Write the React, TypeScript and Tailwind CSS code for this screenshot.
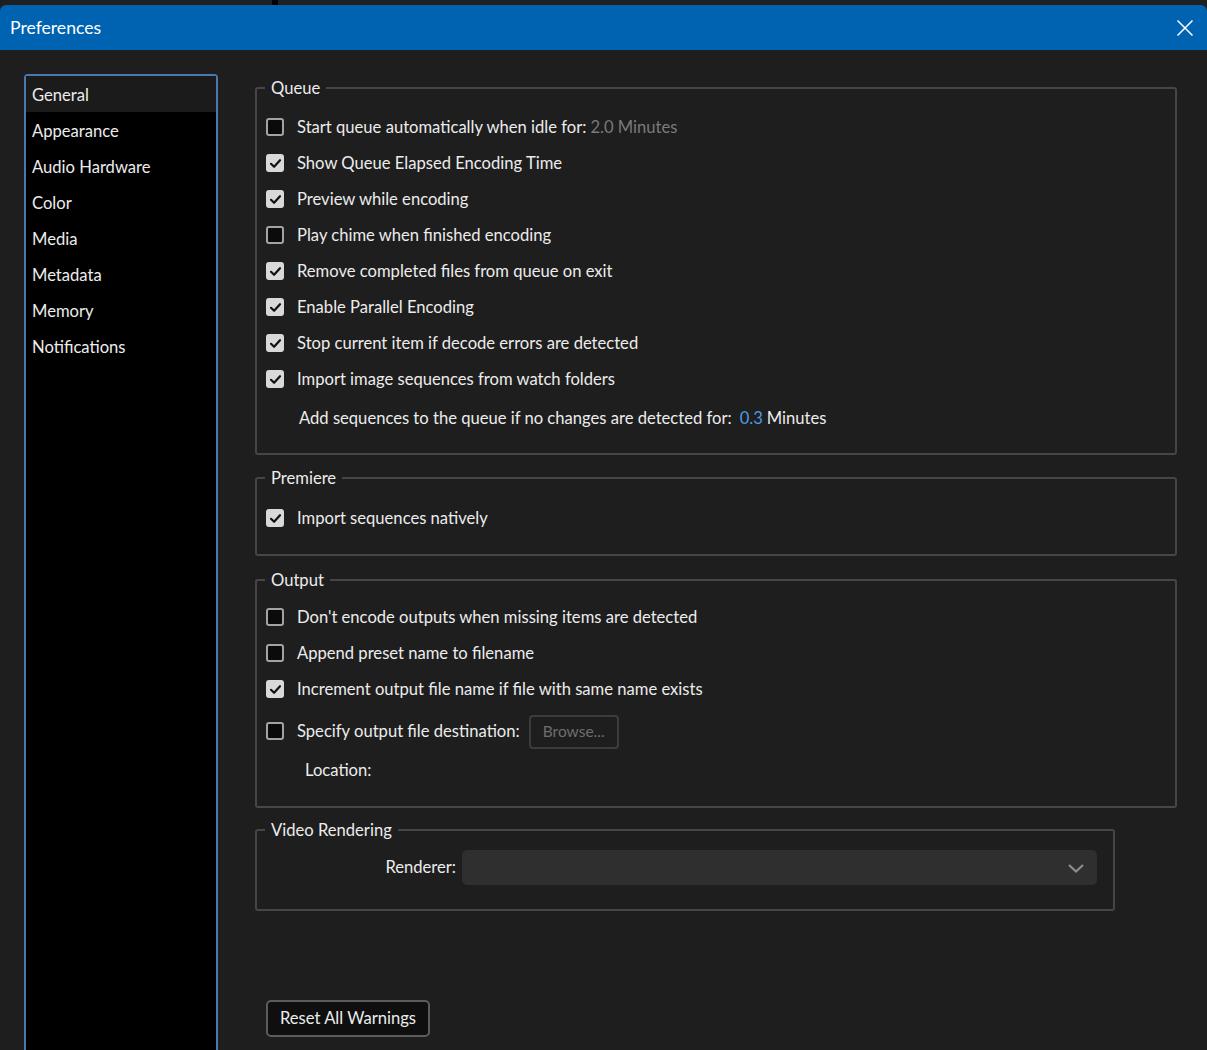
import React from "react";

const font = { fontFamily: '"Lato", "Liberation Sans", sans-serif' };

function Checkbox({ checked }: { checked: boolean }) {
  return checked ? (
    <span className="flex h-[18px] w-[18px] shrink-0 items-center justify-center rounded-[3px] bg-[#d9d9d9]">
      <svg width="13" height="13" viewBox="0 0 13 13" fill="none">
        <path d="M2 6.8 L5.1 9.8 L11 3.2" stroke="#111" strokeWidth="2.2" strokeLinecap="round" strokeLinejoin="round" />
      </svg>
    </span>
  ) : (
    <span className="h-[18px] w-[18px] shrink-0 rounded-[3px] border-2 border-[#a3a3a3] bg-[#0b0b0b]" />
  );
}

function Row({ checked, children, className = "h-9" }: { checked: boolean; children: React.ReactNode; className?: string }) {
  return (
    <div className={`flex items-center gap-[13px] pl-[9px] ${className}`}>
      <Checkbox checked={checked} />
      <div className="flex items-center pt-[1px] text-[16.6px] text-[#ececec]">{children}</div>
    </div>
  );
}

function Group({ title, children, className = "" }: { title: string; children: React.ReactNode; className?: string }) {
  return (
    <fieldset className={`rounded-[3px] border-2 border-[#464646] ${className}`}>
      <legend className="ml-[8px] px-[6px] text-[16.6px] leading-[24px] text-[#ececec]">{title}</legend>
      {children}
    </fieldset>
  );
}

const navItems = ["General", "Appearance", "Audio Hardware", "Color", "Media", "Metadata", "Memory", "Notifications"];

export default function App() {
  return (
    <div className="h-[1050px] w-[1207px] overflow-hidden bg-[#1e1e1e]" style={font}>
      <div className="flex h-[5px] bg-[#1f1f1f]">
        <div className="ml-[272px] h-[5px] w-[6px] bg-black" />
      </div>
      <div className="flex h-[45px] items-center justify-between rounded-t-[6px] bg-[#0063b1] pl-[10px] pr-[13px]">
        <span className="pt-[1px] text-[17.6px] text-white">Preferences</span>
        <svg width="18" height="18" viewBox="0 0 18 18" fill="none">
          <path d="M1.5 1.5 L16.5 16.5 M16.5 1.5 L1.5 16.5" stroke="white" strokeWidth="1.5" />
        </svg>
      </div>
      <div className="flex">
        <div className="ml-[24px] mt-[24px] h-[980px] w-[194px] shrink-0 rounded-t-[4px] border-2 border-[#4a78b5] bg-black">
          {navItems.map((item, i) => (
            <div
              key={item}
              className={`flex h-9 items-center pl-[6px] pt-[2px] text-[16.6px] text-[#ececec] ${i === 0 ? "bg-[#1b1b1b]" : ""}`}
            >
              {item}
            </div>
          ))}
        </div>
        <div className="ml-[37px] mt-[26px] flex w-[922px] flex-col">
          <Group title="Queue" className="pb-[17px] pt-[9px]">
            <Row checked={false}>
              Start queue automatically when idle for:
              <span className="ml-[4px] text-[#7a7a7a]">2.0 Minutes</span>
            </Row>
            <Row checked>Show Queue Elapsed Encoding Time</Row>
            <Row checked>Preview while encoding</Row>
            <Row checked={false}>Play chime when finished encoding</Row>
            <Row checked>Remove completed files from queue on exit</Row>
            <Row checked>Enable Parallel Encoding</Row>
            <Row checked>Stop current item if decode errors are detected</Row>
            <Row checked>Import image sequences from watch folders</Row>
            <div className="mt-[3px] flex h-9 items-center pl-[42px] pt-[1px] text-[16.6px] text-[#ececec]">
              Add sequences to the queue if no changes are detected for:
              <span className="ml-[8px] text-[#4b9be8]">0.3</span>
              <span className="ml-[4px]">Minutes</span>
            </div>
          </Group>
          <Group title="Premiere" className="mt-[11px] pb-[18px] pt-[10px]">
            <Row checked>Import sequences natively</Row>
          </Group>
          <Group title="Output" className="mt-[12px] pb-[21px] pt-[7px]">
            <Row checked={false}>Don't encode outputs when missing items are detected</Row>
            <Row checked={false}>Append preset name to filename</Row>
            <Row checked>Increment output file name if file with same name exists</Row>
            <Row checked={false} className="h-12">
              Specify output file destination:
              <span className="ml-[9px] flex h-[34px] w-[90px] items-center justify-center rounded-[4px] border-2 border-[#3c3c3c] text-[15.5px] text-[#6e6e6e]">
                Browse...
              </span>
            </Row>
            <div className="flex h-[30px] items-center pl-[48px] pt-[1px] text-[16.6px] text-[#ececec]">Location:</div>
          </Group>
          <Group title="Video Rendering" className="mt-[10px] w-[860px] pb-[24px] pt-[8px]">
            <div className="flex items-center">
              <span className="w-[205px] pr-[6px] text-right text-[16.6px] text-[#ececec]">Renderer:</span>
              <div className="flex h-[35px] w-[635px] items-center justify-end rounded-[5px] bg-[#2f2f2f] pr-[12px]">
                <svg width="18" height="12" viewBox="0 0 18 12" fill="none">
                  <path d="M2 3 L9 9.5 L16 3" stroke="#8d8d8d" strokeWidth="2.2" />
                </svg>
              </div>
            </div>
          </Group>
          <div className="mt-[89px] pl-[11px]">
            <button className="h-[37px] rounded-[5px] border-2 border-[#5c5c5c] bg-[#0f0f0f] px-[12px] text-[16.6px] text-[#ececec]">
              Reset All Warnings
            </button>
          </div>
        </div>
      </div>
    </div>
  );
}
